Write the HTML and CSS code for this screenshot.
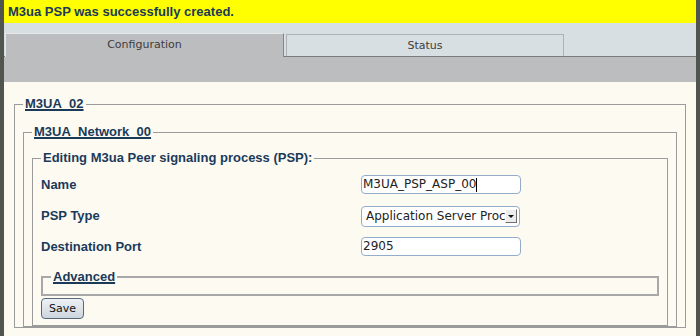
FILE: index.html
```html
<!DOCTYPE html>
<html>
<head>
<meta charset="utf-8">
<link rel="stylesheet" href="styles.css">
</head>
<body>
<div class="page">
  <div class="banner">M3ua PSP was successfully created.</div>
  <div class="tabs">
    <div class="tab active">Configuration</div>
    <div class="tab">Status</div>
  </div>
  <div class="subbar"></div>
  <div class="content">
    <fieldset class="fs fs1">
      <legend class="lg link">M3UA_02</legend>
      <fieldset class="fs fs2">
        <legend class="lg link">M3UA_Network_00</legend>
        <fieldset class="fs fs3">
          <legend class="lg">Editing M3ua Peer signaling process (PSP):</legend>
          <div class="form">
            <div class="label">Name</div>
            <div class="cell"><div class="input"><span class="val">M3UA_PSP_ASP_00</span><span class="caret"></span></div></div>
            <div class="label">PSP Type</div>
            <div class="cell"><div class="select"><span class="opt">Application Server Process</span><span class="arrow"><span class="tri"></span></span></div></div>
            <div class="label">Destination Port</div>
            <div class="cell"><div class="input"><span class="val">2905</span></div></div>
          </div>
          <fieldset class="fs adv"><legend class="lg link">Advanced</legend></fieldset>
          <button class="save">Save</button>
        </fieldset>
      </fieldset>
    </fieldset>
  </div>
</div>
</body>
</html>
```

FILE: styles.css
```css
html, body {
  margin: 0;
  padding: 0;
}
body {
  background: #50554f;
  height: 336px;
  overflow: hidden;
  font-family: "Liberation Sans", Arial, sans-serif;
}
.page {
  margin: 0 4px;
  height: 336px;
  background: #fdfaf2;
  overflow: hidden;
}
.banner {
  height: 23px;
  line-height: 23px;
  background: #ffff00;
  color: #1b3a5a;
  font-weight: bold;
  font-size: 13px;
  padding-left: 4px;
}
.tabs {
  height: 33px;
  background: #d8dfe3;
  display: flex;
  align-items: flex-end;
  padding-left: 1px;
}
.tab {
  font-family: "DejaVu Sans", sans-serif;
  font-size: 11px;
  color: #3c3c3c;
  text-align: center;
  box-sizing: border-box;
}
.tab.active {
  width: 279px;
  height: 24px;
  line-height: 22px;
  background: #bcbdbe;
  border-top: 1px solid #e4e6e8;
  border-left: 1px solid #e4e6e8;
  border-right: 1px solid #858585;
  margin-bottom: -1px;
}
.tab:not(.active) {
  width: 278px;
  height: 22px;
  line-height: 21px;
  margin-left: 2px;
  background: #d8dfe3;
  border: 1px solid #aeb2b5;
  border-bottom: none;
}
.subbar {
  height: 25px;
  background: #bcbdbe;
  border-top: 1px solid #7b7b7b;
}
.content {
  padding-top: 13px;
}
.fs {
  margin: 0;
  padding: 0 8px;
  border: 1px solid #9b9b9b;
  min-width: 0;
}
.lg {
  padding: 0 2px;
  font-weight: bold;
  font-size: 13px;
  line-height: 18px;
  color: #1b3a5a;
}
.lg.link {
  text-decoration: underline;
  text-decoration-thickness: 2px;
  text-underline-offset: 1px;
}
.fs1 {
  margin: 0 10px;
}
.fs2 {
  margin-top: 10px;
}
.fs3 {
  margin-top: 8px;
  padding-bottom: 6px;
}
.form {
  margin-top: 2px;
  display: grid;
  grid-template-columns: 320px 160px;
  grid-auto-rows: 31px;
}
.label {
  font-weight: bold;
  font-size: 13px;
  color: #1b3a5a;
  display: flex;
  align-items: center;
}
.cell {
  display: flex;
  align-items: center;
}
.input {
  box-sizing: border-box;
  width: 160px;
  height: 19px;
  border: 1px solid #93acc9;
  border-radius: 4px;
  background: #ffffff;
  font-family: "DejaVu Sans", sans-serif;
  font-size: 12px;
  line-height: 17px;
  color: #222;
  padding: 0 1px;
  display: flex;
  align-items: center;
}
.caret {
  display: inline-block;
  width: 1px;
  height: 14px;
  background: #000;
}
.select {
  box-sizing: border-box;
  width: 159px;
  height: 21px;
  margin-top: 1px;
  border: 1px solid #93acc9;
  border-radius: 4px;
  background: #ffffff;
  display: flex;
  align-items: center;
  padding: 0 2px 0 4px;
  font-family: "DejaVu Sans", sans-serif;
  font-size: 12px;
  color: #222;
}
.opt {
  flex: 1;
  overflow: hidden;
  white-space: nowrap;
}
.arrow {
  box-sizing: border-box;
  width: 12px;
  height: 14px;
  background: #ececec;
  border-top: 1px solid #fff;
  border-left: 1px solid #fff;
  border-right: 1px solid #6f6f6f;
  border-bottom: 1px solid #6f6f6f;
  display: flex;
  align-items: center;
  justify-content: center;
}
.tri {
  width: 0;
  height: 0;
  border-left: 3px solid transparent;
  border-right: 3px solid transparent;
  border-top: 3px solid #111;
}
.adv {
  margin-top: 6px;
  border-width: 2px;
  border-color: #a8a8a8;
  padding-bottom: 8px;
}
.save {
  display: block;
  margin: 2px 0 0 0;
  width: 43px;
  height: 21px;
  padding: 0;
  border: 1px solid #56697c;
  border-radius: 4px;
  background: linear-gradient(#eef2f5, #ccd5dd);
  font-family: "DejaVu Sans", sans-serif;
  font-size: 11px;
  color: #111;
}
```
